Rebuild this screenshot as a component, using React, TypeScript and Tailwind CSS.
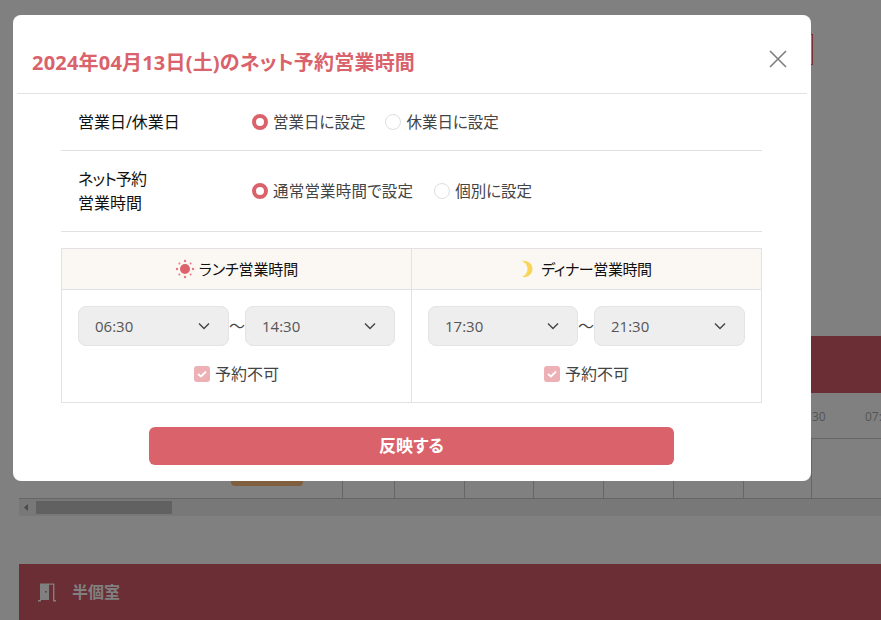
const FONT = "font-['Open_Sans','Noto_Sans_CJK_JP',sans-serif] [font-feature-settings:'palt']"

const CELL_WIDTHS = ['w-[52px]', 'w-[70px]', 'w-[69px]', 'w-[70px]', 'w-[70px]', 'w-[70px]', 'w-[68px]', 'w-[70px]']

function SunIcon() {
  return (
    <svg width="20" height="20" viewBox="0 0 20 20" className="shrink-0">
      <circle cx="10" cy="10" r="5" fill="#dc626b" />
      <circle cx="10" cy="2" r="1.2" fill="#e8767e" />
      <circle cx="10" cy="18" r="1.2" fill="#e8767e" />
      <circle cx="2" cy="10" r="1.2" fill="#e8767e" />
      <circle cx="18" cy="10" r="1.2" fill="#e8767e" />
      <circle cx="4.4" cy="4.4" r="1" fill="#e8767e" />
      <circle cx="15.6" cy="4.4" r="1" fill="#e8767e" />
      <circle cx="4.4" cy="15.6" r="1" fill="#e8767e" />
      <circle cx="15.6" cy="15.6" r="1" fill="#e8767e" />
    </svg>
  )
}

function MoonIcon() {
  return (
    <svg width="12" height="18" viewBox="0 0 12 18" className="shrink-0">
      <path d="M1 1 C7 0 11.5 4 11.5 9 C11.5 14 7 18 1 17 C5 15 6.5 12 6.5 9 C6.5 6 5 3 1 1 Z" fill="#f8d559" />
    </svg>
  )
}

function Radio({ label, checked }: { label: string; checked?: boolean }) {
  return (
    <label className="flex items-center gap-[5px]">
      {checked ? (
        <span className="size-4 rounded-full border-[4px] border-[#d9626b] bg-white" />
      ) : (
        <span className="size-4 rounded-full border border-[#dedede] bg-white" />
      )}
      <span className="text-[15.5px] leading-5 text-[#444]">{label}</span>
    </label>
  )
}

function TimeSelect({ value, width }: { value: string; width: string }) {
  return (
    <div className={`${width} flex h-10 items-center justify-between rounded-lg border border-[#e3e3e8] bg-[#eeeeee] pl-4 pr-[18px]`}>
      <span className="text-[15px] text-[#555]">{value}</span>
      <svg width="12" height="8" viewBox="0 0 12 8" fill="none" stroke="#444" strokeWidth="1.4">
        <path d="M1 1.5 L6 6.5 L11 1.5" />
      </svg>
    </div>
  )
}

function Unavailable() {
  return (
    <div className="mt-[18px] flex items-center justify-center gap-[5px]">
      <span className="flex size-4 items-center justify-center rounded-[3px] bg-[#edb0b5]">
        <svg width="10" height="8" viewBox="0 0 10 8" fill="none" stroke="#fff" strokeWidth="1.8">
          <path d="M1 4 L4 6.5 L9 1.5" />
        </svg>
      </span>
      <span className="text-[16px] leading-5 text-[#444]">予約不可</span>
    </div>
  )
}

type ShiftProps = {
  icon: React.ReactNode
  title: string
  from: string
  to: string
  bordered?: boolean
  gap: string
  tracking: string
  fromWidth: string
  toWidth: string
  columnWidth: string
}

function ShiftColumn({ icon, title, from, to, bordered, gap, tracking, fromWidth, toWidth, columnWidth }: ShiftProps) {
  return (
    <div className={bordered ? `${columnWidth} border-r border-[#e1e1e6]` : columnWidth}>
      <div className={`flex h-[41px] items-center justify-center ${gap} border-b border-[#e1e1e6] bg-[#fbf8f3]`}>
        {icon}
        <span className={`text-[15px] ${tracking} text-[#111]`}>{title}</span>
      </div>
      <div className="px-4 pt-4">
        <div className="flex items-center">
          <TimeSelect value={from} width={fromWidth} />
          <span className="w-4 text-center text-[16px] leading-none text-[#444]">〜</span>
          <TimeSelect value={to} width={toWidth} />
        </div>
        <Unavailable />
      </div>
    </div>
  )
}

function Background() {
  return (
    <div className="h-[620px] w-[881px] overflow-hidden bg-[#808080] pl-[19px]">
      <div className="flex h-[336px] justify-end pr-[68px] pt-[34px]">
        <div className="h-[31px] w-[100px] border border-[#7d3038]" />
      </div>
      <div className="h-[57px] bg-[#6b2e34]" />
      <div className="flex h-[46px] items-center justify-end border-b border-[#666] pt-[3px] text-[12px] text-[#555]">
        <span className="w-[54px] pl-[1px]">30</span>
        <span className="w-[16px] overflow-hidden whitespace-nowrap">07:</span>
      </div>
      <div className="flex h-[60px] justify-end border-b border-[#666]">
        <div className="flex-1 pl-[212px] pt-[36px]">
          <div className="h-[11px] w-[72px] rounded-b bg-[#7f5f3e]" />
        </div>
        {CELL_WIDTHS.map((w, i) => (
          <div key={i} className={`${w} border-l border-[#666]`} />
        ))}
      </div>
      <div className="flex h-[17px] items-center bg-[#787878]">
        <svg width="17" height="17" viewBox="0 0 17 17">
          <path d="M5 8.5 L9 5 L9 12 Z" fill="#4a4a4a" />
        </svg>
        <div className="h-[13px] w-[136px] bg-[#616161]" />
      </div>
      <div className="mt-[48px] flex h-[56px] items-center gap-[16px] bg-[#6b2e34] pl-[19px]">
        <svg width="18" height="20" viewBox="0 0 18 20" fill="#808080">
          <path d="M2 18 V1.5 H11 V18 Z M7 9 h1.6 v1.6 h-1.6 Z" fillRule="evenodd" />
          <path d="M0 18 H3 V19.5 H0 Z M11 1.5 H16.4 V18 H18 V19.5 H15 V2.8 H11 Z" />
        </svg>
        <span className="text-[16px] font-bold text-[#808080]">半個室</span>
      </div>
    </div>
  )
}

export default function App() {
  return (
    <div className={`relative h-[620px] w-[881px] overflow-hidden ${FONT}`}>
      <Background />
      <div className="absolute left-[13px] top-[15px] h-[466px] w-[798px] rounded-lg bg-white">
        <div className="mx-1 flex h-[79px] items-start justify-between border-b border-[#e3e3e3] pl-[15px] pr-[19px]">
          <h2 className="pt-[33px] text-[20px] font-bold leading-[30px] tracking-[0.2px] text-[#d9626b]">2024年04月13日(土)のネット予約営業時間</h2>
          <svg width="20" height="20" viewBox="0 0 20 20" className="mt-[34px]" stroke="#808080" strokeWidth="1.7">
            <path d="M2 2 L18 18 M18 2 L2 18" />
          </svg>
        </div>
        <div className="ml-12 mr-[49px]">
          <div className="flex h-[57px] items-center border-b border-[#e1e1e1] pl-[17px]">
            <div className="w-[174px] text-[16px] text-[#111]">営業日/休業日</div>
            <div className="flex gap-[20px]">
              <Radio label="営業日に設定" checked />
              <Radio label="休業日に設定" />
            </div>
          </div>
          <div className="flex h-[81px] items-center border-b border-[#e1e1e1] pl-[17px]">
            <div className="w-[174px] text-[16px] leading-[24px] text-[#111]">
              <span className="tracking-[-0.8px]">ネット予約</span>
              <br />
              営業時間
            </div>
            <div className="flex gap-[21px]">
              <span className="contents [&_span:last-child]:tracking-[0.2px]">
                <Radio label="通常営業時間で設定" checked />
              </span>
              <Radio label="個別に設定" />
            </div>
          </div>
          <div className="mt-4 flex h-[155px] border border-[#e1e1e6]">
            <ShiftColumn icon={<SunIcon />} title="ランチ営業時間" from="06:30" to="14:30" bordered gap="gap-[4px]" tracking="tracking-[-0.1px]" fromWidth="w-[151px]" toWidth="w-[150px]" columnWidth="w-[350px]" />
            <ShiftColumn icon={<MoonIcon />} title="ディナー営業時間" from="17:30" to="21:30" gap="gap-[8px]" tracking="tracking-[-0.4px]" fromWidth="w-[150px]" toWidth="w-[151px]" columnWidth="w-[349px]" />
          </div>
          <button className="mx-auto mt-6 flex h-[38px] w-[525px] items-center justify-center rounded-md bg-[#d9626b] text-[17px] font-bold text-white">
            反映する
          </button>
        </div>
      </div>
    </div>
  )
}
